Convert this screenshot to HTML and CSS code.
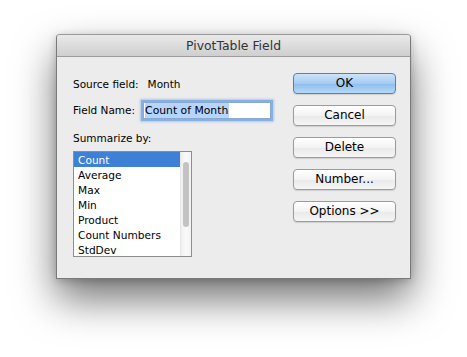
FILE: index.html
```html
<!DOCTYPE html>
<html>
<head>
<meta charset="utf-8">
<link rel="stylesheet" href="styles.css">
</head>
<body>
<div class="page">
  <div class="window">
    <div class="titlebar">PivotTable Field</div>
    <div class="content">
      <div class="left">
        <div class="row source"><span>Source field:</span><span class="val">Month</span></div>
        <div class="row field"><span>Field Name:</span><div class="input"><span class="sel">Count of Month</span></div></div>
        <div class="label">Summarize by:</div>
        <div class="list">
          <div class="items">
            <div class="item selected">Count</div>
            <div class="item">Average</div>
            <div class="item">Max</div>
            <div class="item">Min</div>
            <div class="item">Product</div>
            <div class="item">Count Numbers</div>
            <div class="item">StdDev</div>
          </div>
          <div class="scroll"><div class="thumb"></div></div>
        </div>
      </div>
      <div class="buttons">
        <div class="btn default">OK</div>
        <div class="btn">Cancel</div>
        <div class="btn">Delete</div>
        <div class="btn">Number...</div>
        <div class="btn">Options &gt;&gt;</div>
      </div>
    </div>
  </div>
</div>
</body>
</html>
```
FILE: styles.css
```css
html, body { margin: 0; padding: 0; background: #ffffff; }
body { font-family: "DejaVu Sans", sans-serif; color: #000; }
.page { padding: 34px 0 0 56px; height: 357px; box-sizing: border-box; overflow: hidden; }
.window {
  width: 355px; height: 245px; box-sizing: border-box;
  background: #ececec;
  border: 1px solid #7a7a7a; border-top-color: #9a9a9a;
  border-radius: 4px 4px 0 0;
  box-shadow: 0 20px 40px rgba(0,0,0,0.55), 0 2px 8px rgba(0,0,0,0.2);
}
.titlebar {
  height: 21px; line-height: 22px;
  text-align: center; font-size: 12.4px; color: #333;
  background: linear-gradient(#e9e9e9, #cfcfcf);
  border-bottom: 1px solid #9c9c9c;
  border-radius: 3px 3px 0 0;
}
.content { display: flex; justify-content: space-between; padding: 16px 14px 0 16px; }
.left { display: flex; flex-direction: column; font-size: 10.5px; }
.row { display: flex; align-items: center; }
.source { height: 21px; }
.source .val { margin-left: 9px; }
.field { height: 22px; margin-top: 5px; }
.input {
  margin-left: 8px; width: 128px; height: 17px; box-sizing: border-box;
  background: #fff; border: 1px solid #8aa9cf;
  box-shadow: 0 0 0 2px #84b0e4, 0 0 2px 3px rgba(120,165,225,0.5);
  display: flex; align-items: center; padding-left: 1px;
  font-size: 10.8px;
}
.sel { background: #b5d5ff; line-height: 15px; padding-right: 1px; }
.label { margin-top: 10px; line-height: 15px; }
.list {
  margin-top: 5px; width: 119px; height: 106px; box-sizing: border-box;
  border: 1px solid #8e8e8e; background: #fff;
  display: flex;
}
.items { flex: 1; }
.item { height: 15px; line-height: 16px; padding-left: 4px; font-size: 10.6px; white-space: nowrap; }
.item.selected { background: #3d80d6; color: #fff; }
.scroll {
  width: 11px; background: linear-gradient(90deg, #f0f0f0, #fafafa 50%, #f2f2f2);
  border-left: 1px solid #e6e6e6; box-sizing: border-box; padding: 10px 0 0 2px;
}
.thumb { width: 6px; height: 65px; border-radius: 3px; background: #c3c3c3; }
.buttons { display: flex; flex-direction: column; gap: 11px; padding-right: 0; }
.btn {
  width: 103px; height: 21px; box-sizing: border-box;
  border: 1px solid #9b9b9b; border-radius: 4px;
  background: linear-gradient(#ffffff, #f3f3f3 50%, #e9e9e9 51%, #f6f6f6);
  font-size: 12px; text-align: center; line-height: 19px;
  box-shadow: 0 1px 1px rgba(0,0,0,0.12);
}
.btn.default {
  border-color: #5c7fae;
  background: linear-gradient(#cde3f9, #a6cbf1 50%, #8dbcee 51%, #b6daf8);
}
```
